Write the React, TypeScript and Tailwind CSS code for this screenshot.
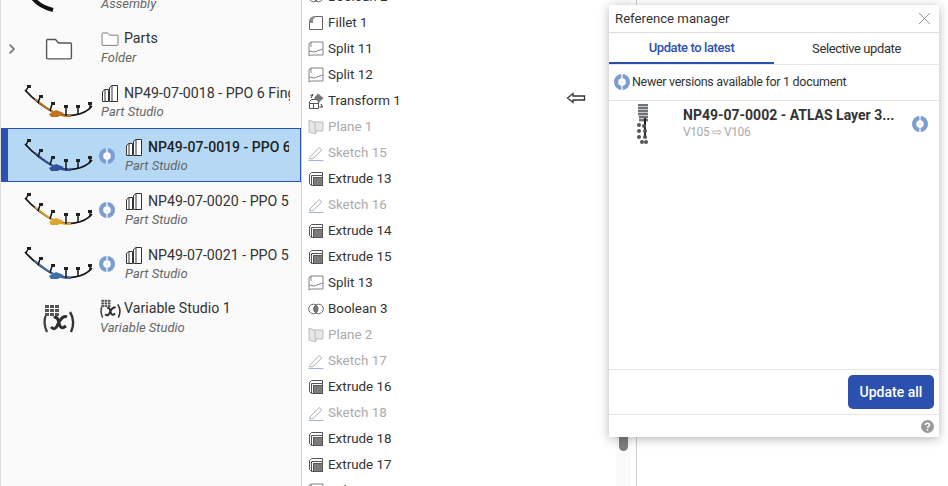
import { ChevronRight, X } from 'lucide-react';

const font = "font-['Roboto','Liberation_Sans',sans-serif]";

const InfoIcon = ({ size = 16 }: { size?: number }) => (
  <svg width={size} height={size} viewBox="0 0 16 16" className="shrink-0">
    <circle cx="8" cy="8" r="8" fill="#7c9dd2" />
    <rect x="7.2" y="0" width="1.6" height="16" fill="#dfe8f6" />
    <circle cx="8" cy="8" r="3.8" fill="#fff" />
    <circle cx="8" cy="8" r="1" fill="#dbe5f4" />
  </svg>
);

const Harness = ({ color }: { color: string }) => (
  <svg width="72" height="36" viewBox="0 0 72 36" className="shrink-0">
    <path d="M2 5 C10 14 20 22 32 28 C42 32 60 32 69 21" fill="none" stroke="#141414" strokeWidth="1.8" />
    <path d="M12 14 C18 19 24 24 32 28 C36 30 42 31 48 31" fill="none" stroke={color} strokeWidth="2" />
    <path d="M3 6 L5 2 M15 18 L17 12 M27 26 L29 19 M43 31 L43 22 M55 30 L55 22 M67 24 L67 19" fill="none" stroke="#141414" strokeWidth="1.5" />
    <path d="M4 0h4v3h-4z M16 10h4v3h-4z M28 17h4v3h-4z M41 20h4v3h-4z M53 20h4v3h-4z M65 17h4v3h-4z" fill="#222" />
    <path d="M26 29 L33 25 L41 28 L35 32 L28 32 Z" fill={color} />
  </svg>
);

const FolderIcon = ({ size }: { size: number }) => (
  <svg width={size} height={size * 0.78} viewBox="0 0 28 22" fill="#fff" stroke="#555" strokeWidth={size > 20 ? 1.4 : 1.2}>
    <path d="M1.5 2.5 a1 1 0 0 1 1-1 h8 l3 3.5 h12 a1 1 0 0 1 1 1 v14 a1 1 0 0 1-1 1 h-23 a1 1 0 0 1-1-1 z" />
  </svg>
);

const StudioIcon = () => (
  <svg width="18" height="19" viewBox="0 0 18 19" fill="#fff" stroke="#333" strokeWidth="1" className="shrink-0">
    <path d="M1.5 7.5 L4 5.5 H7.5 V17.5 H4 L1.5 17.5 Z" />
    <path d="M4 5.5 V17.5" />
    <path d="M8.5 3.5 L11 1.5 H16.5 V17.5 H8.5 Z" />
    <path d="M11 1.5 V17.5" />
  </svg>
);

const VariableIcon = ({ big }: { big?: boolean }) => (
  <svg width={big ? 32 : 21} height={big ? 30 : 20} viewBox="0 0 32 30" className="shrink-0">
    <g fill="#555">
      <rect x="2" y="1" width="4" height="3" /><rect x="7" y="1" width="4" height="3" /><rect x="12" y="1" width="4" height="3" />
      <rect x="2" y="5" width="4" height="3" /><rect x="7" y="5" width="4" height="3" /><rect x="12" y="5" width="4" height="3" />
      <rect x="2" y="9" width="4" height="3" /><rect x="7" y="9" width="4" height="3" /><rect x="12" y="9" width="4" height="3" />
    </g>
    <path d="M2.5 12 C1 17 1.5 23 4 28" fill="none" stroke="#444" strokeWidth="2.4" />
    <path d="M27 8 C31 14 31 22 28 28" fill="none" stroke="#333" strokeWidth="2.4" />
    <path d="M11 14 C14 12 15 15 16 19 C17 24 19 25 23 22 M24 13 C20 11 17 16 15 20 C13 25 11 26 8 23" fill="none" stroke="#2d2d2d" strokeWidth="3" />
  </svg>
);

type Kind = 'fillet' | 'split' | 'transform' | 'plane' | 'sketch' | 'extrude' | 'boolean';

const FeatureIcon = ({ kind }: { kind: Kind }) => {
  if (kind === 'fillet')
    return (
      <svg width="16" height="16" viewBox="0 0 16 16" fill="none" stroke="#666">
        <path d="M1.5 14.5 V7 C1.5 3 4 1.5 8 1.5 H14.5 V14.5 Z" fill="#fff" />
        <path d="M1.5 8 C1.5 4 4 1.5 8 1.5 L5 4.5 V8 Z" fill="#8a8a8a" stroke="none" />
      </svg>
    );
  if (kind === 'split')
    return (
      <svg width="16" height="16" viewBox="0 0 16 16" fill="#fff" stroke="#777" strokeWidth="0.9">
        <path d="M1 2.5 L3 1 H15 V14 H3 L1 15 Z" />
        <path d="M1 10 L6 11 L15 8" />
        <path d="M3 1 V6" />
      </svg>
    );
  if (kind === 'transform')
    return (
      <svg width="16" height="16" viewBox="0 0 16 16" fill="none" stroke="#555" strokeWidth="1">
        <path d="M1.5 8.5 L3.5 6.5 H10.5 V15.5 H1.5 Z" fill="#fff" />
        <path d="M1.5 10.5 H10.5 M5.5 10.5 V15.5" />
        <path d="M10 0.5 L15.5 5 L11 9.5 L6 5 Z" fill="#777" stroke="none" />
        <path d="M3 5 L5 1.5 M5 1.5 L2.5 2.5 M13 11 L14.5 14 L11.5 14" stroke="#333" />
      </svg>
    );
  if (kind === 'plane')
    return (
      <svg width="16" height="16" viewBox="0 0 16 16" fill="#e6e6e6" stroke="#bbb">
        <path d="M1 1 L6 3 H15 V12 H8 V15 L1 13 Z" />
        <path d="M7 3 V12 H8" fill="none" />
      </svg>
    );
  if (kind === 'sketch')
    return (
      <svg width="16" height="16" viewBox="0 0 16 16" fill="none">
        <path d="M2 12 L11 2.5 L14 5 L5 13.5 L1.5 14 Z" fill="#fff" stroke="#b4b4b4" />
        <path d="M0.5 15.5 H15.5" stroke="#9db4df" />
      </svg>
    );
  if (kind === 'boolean')
    return (
      <svg width="16" height="16" viewBox="0 0 16 16" fill="none" stroke="#666">
        <circle cx="5.5" cy="8" r="4.8" fill="#fff" />
        <circle cx="10.5" cy="8" r="4.8" fill="#fff" />
        <path d="M8 4 A5 5 0 0 1 8 12 A5 5 0 0 1 8 4" fill="#777" />
      </svg>
    );
  return (
    <svg width="16" height="16" viewBox="0 0 16 16" fill="#fff" stroke="#555">
      <path d="M1.5 3.5 L3.5 1.5 H14.5 V14.5 H3.5 L1.5 12.5 Z" />
      <path d="M3.5 14.5 V4.5 H14.5" fill="none" />
      <rect x="5.5" y="6.5" width="9" height="8" fill="#7c7c7c" />
    </svg>
  );
};

const features: { name: string; kind: Kind }[] = [
  { name: 'Boolean 2', kind: 'boolean' },
  { name: 'Fillet 1', kind: 'fillet' },
  { name: 'Split 11', kind: 'split' },
  { name: 'Split 12', kind: 'split' },
  { name: 'Transform 1', kind: 'transform' },
  { name: 'Plane 1', kind: 'plane' },
  { name: 'Sketch 15', kind: 'sketch' },
  { name: 'Extrude 13', kind: 'extrude' },
  { name: 'Sketch 16', kind: 'sketch' },
  { name: 'Extrude 14', kind: 'extrude' },
  { name: 'Extrude 15', kind: 'extrude' },
  { name: 'Split 13', kind: 'split' },
  { name: 'Boolean 3', kind: 'boolean' },
  { name: 'Plane 2', kind: 'plane' },
  { name: 'Sketch 17', kind: 'sketch' },
  { name: 'Extrude 16', kind: 'extrude' },
  { name: 'Sketch 18', kind: 'sketch' },
  { name: 'Extrude 18', kind: 'extrude' },
  { name: 'Extrude 17', kind: 'extrude' },
  { name: 'Split 14', kind: 'split' },
];

const StudioRow = ({ name, color, info, selected }: { name: string; color: string; info?: boolean; selected?: boolean }) => (
  <div
    className={
      selected
        ? 'h-[54px] -mt-[2px] mb-[2px] pt-[4px] flex items-center bg-[#b5d9f5] border border-[#2c50ae] border-l-[7px]'
        : 'h-[54px] flex items-center'
    }
  >
    <div className={selected ? 'w-[15px]' : 'w-[22px]'} />
    <Harness color={color} />
    <div className={info ? 'ml-[4px] mr-[10px] mb-[2px] flex' : 'w-[6px]'}>{info && <InfoIcon />}</div>
    <div className="min-w-0 flex-1 pr-[11px] mb-[1px]">
      <div className="flex items-center gap-[5px] h-[19px]">
        <StudioIcon />
        <span className={selected ? 'whitespace-nowrap overflow-hidden text-[14px] font-medium text-[#222]' : 'whitespace-nowrap overflow-hidden text-[14.2px] text-[#333]'}>
          {name}
        </span>
      </div>
      <div className="italic text-[13px] leading-[18px] text-[#666]">Part Studio</div>
    </div>
  </div>
);

export default function App() {
  return (
    <div className={`${font} relative w-[948px] h-[486px] overflow-hidden bg-white flex`}>
      <div className="w-[302px] shrink-0 bg-[#fafafa] border-l border-r border-[#cfcfcf] border-l-[#dddddd] -mt-[32px] h-[518px]">
        <div className="h-[54px] flex items-center">
          <div className="w-[22px]" />
          <svg width="72" height="36" viewBox="0 0 72 36" className="shrink-0">
            <path d="M9 20 C14 27 22 31 30 33" fill="none" stroke="#111" strokeWidth="4" />
          </svg>
          <div className="w-[6px]" />
          <div className="mb-[1px]">
            <div className="h-[19px]" />
            <div className="italic text-[13px] leading-[18px] text-[#666]">Assembly</div>
          </div>
        </div>
        <div className="h-[54px] flex items-center">
          <div className="w-[22px] flex items-center pl-[3px]">
            <ChevronRight size={16} strokeWidth={2.4} className="text-[#666]" />
          </div>
          <div className="w-[72px] flex justify-center shrink-0">
            <FolderIcon size={28} />
          </div>
          <div className="w-[6px]" />
          <div className="mb-[1px]">
            <div className="flex items-center gap-[5px] h-[18px] mb-[1px]">
              <FolderIcon size={18} />
              <span className="text-[14.2px] text-[#333]">Parts</span>
            </div>
            <div className="italic text-[13px] leading-[18px] text-[#666]">Folder</div>
          </div>
        </div>
        <StudioRow name="NP49-07-0018 - PPO 6 Finger" color="#c0721f" />
        <StudioRow name="NP49-07-0019 - PPO 6 Finger" color="#33509e" info selected />
        <StudioRow name="NP49-07-0020 - PPO 5 Finger" color="#dca42c" info />
        <StudioRow name="NP49-07-0021 - PPO 5 Finger" color="#3f6fa8" info />
        <div className="h-[54px] flex items-center">
          <div className="w-[22px]" />
          <div className="w-[72px] flex justify-center shrink-0">
            <VariableIcon big />
          </div>
          <div className="w-[5px]" />
          <div className="mb-[1px]">
            <div className="flex items-center gap-[3px] h-[18px] mb-[1px]">
              <VariableIcon />
              <span className="text-[14.2px] text-[#333]">Variable Studio 1</span>
            </div>
            <div className="italic text-[13px] leading-[18px] text-[#666]">Variable Studio</div>
          </div>
        </div>
      </div>

      <div className="w-[314px] shrink-0 -mt-[16px] h-[520px] overflow-hidden">
        {features.map((f) => {
          const dim = f.kind === 'plane' || f.kind === 'sketch';
          return (
            <div key={f.name} className="h-[26px] flex items-center pl-[6px] gap-[4px]">
              <FeatureIcon kind={f.kind} />
              <span className={dim ? 'text-[13.4px] text-[#aaa]' : 'text-[13.4px] text-[#333]'}>{f.name}</span>
            </div>
          );
        })}
      </div>

      <div className="w-[15px] shrink-0 bg-[#fafafa] flex justify-center">
        <div className="w-[9px] h-[17px] mt-[434px] rounded-b-[5px] bg-[#7f7f7f]" />
      </div>
      <div className="w-[5px] shrink-0" />
      <div className="w-px shrink-0 bg-[#cfcfcf]" />

      <svg width="20" height="12" viewBox="0 0 20 12" className="absolute left-[566px] top-[92px]">
        <path d="M1.5 6 L7 1.5 V4 H18.5 V8 H7 V10.5 Z" fill="#fff" stroke="#333" strokeWidth="1.3" />
      </svg>

      <div className="absolute left-[609px] top-[5px] w-[330px] h-[432px] bg-white shadow-[0_2px_10px_rgba(0,0,0,0.28)] flex flex-col">
        <div className="h-[28px] flex items-center justify-between pl-[6px] pr-[4px] border-b border-[#dddddd] shrink-0">
          <span className="text-[13.2px] text-[#333]">Reference manager</span>
          <X size={21} strokeWidth={1} className="text-[#888]" />
        </div>
        <div className="h-[32px] flex border-b border-[#e6e6e6] shrink-0 -mb-px">
          <div className="w-[165px] flex items-center justify-center text-[13px] tracking-[-0.4px] font-medium text-[#2c50ae] border-b-2 border-[#2c50ae]">
            Update to latest
          </div>
          <div className="flex-1 flex items-center justify-center text-[13px] tracking-[-0.4px] text-[#333]">Selective update</div>
        </div>
        <div className="h-[37px] flex items-center pl-[5px] gap-[2px] border-b border-[#e6e6e6] shrink-0 text-[12.5px] tracking-[-0.3px] text-[#333]">
          <InfoIcon />
          <span>Newer versions available for 1 document</span>
        </div>
        <div className="flex-1 border-b border-[#e6e6e6]">
          <div className="flex items-start pt-[3px]">
            <svg width="14" height="40" viewBox="0 0 14 40" className="ml-[27px] shrink-0">
              <g fill="#6f7378">
                <rect x="2" y="0" width="10" height="2.4" /><rect x="2" y="3" width="10" height="2.4" /><rect x="2" y="6" width="10" height="2.4" /><rect x="2" y="9" width="10" height="2.4" />
                <rect x="3" y="12" width="9" height="2.4" /><rect x="3" y="15" width="9" height="2.4" />
              </g>
              <path d="M9 14 V34" stroke="#222" strokeWidth="2" />
              <g fill="#555">
                <circle cx="3" cy="21" r="2" /><circle cx="8" cy="22" r="2" /><circle cx="3" cy="27" r="2" /><circle cx="9" cy="27" r="2" /><circle cx="3" cy="33" r="2" /><circle cx="9" cy="33" r="2" /><circle cx="6" cy="38" r="2" /><circle cx="10" cy="38" r="2" />
              </g>
            </svg>
            <div className="ml-[33px] w-[222px] pt-[2px]">
              <div className="text-[14px] leading-[18px] font-bold text-[#333] whitespace-nowrap">NP49-07-0002 - ATLAS Layer 3...</div>
              <div className="text-[12px] tracking-[-0.4px] leading-[16px] text-[#aaa]">V105 ⇨ V106</div>
            </div>
            <div className="ml-[7px] mt-[12px]">
              <InfoIcon />
            </div>
          </div>
        </div>
        <div className="h-[45px] flex items-center justify-end pr-[5px] border-b border-[#e6e6e6] shrink-0">
          <button className="w-[86px] h-[34px] rounded-[5px] bg-[#2c50ae] text-white text-[14px] font-medium">Update all</button>
        </div>
        <div className="h-[22px] flex items-center justify-end pr-[5px] shrink-0">
          <svg width="13" height="13" viewBox="0 0 13 13">
            <circle cx="6.5" cy="6.5" r="6.5" fill="#999" />
            <path d="M4.4 5 C4.4 2.6 8.6 2.6 8.6 5 C8.6 6.4 6.5 6.4 6.5 8" fill="none" stroke="#fff" strokeWidth="1.6" />
            <rect x="5.7" y="9" width="1.6" height="1.6" fill="#fff" />
          </svg>
        </div>
      </div>
    </div>
  );
}
